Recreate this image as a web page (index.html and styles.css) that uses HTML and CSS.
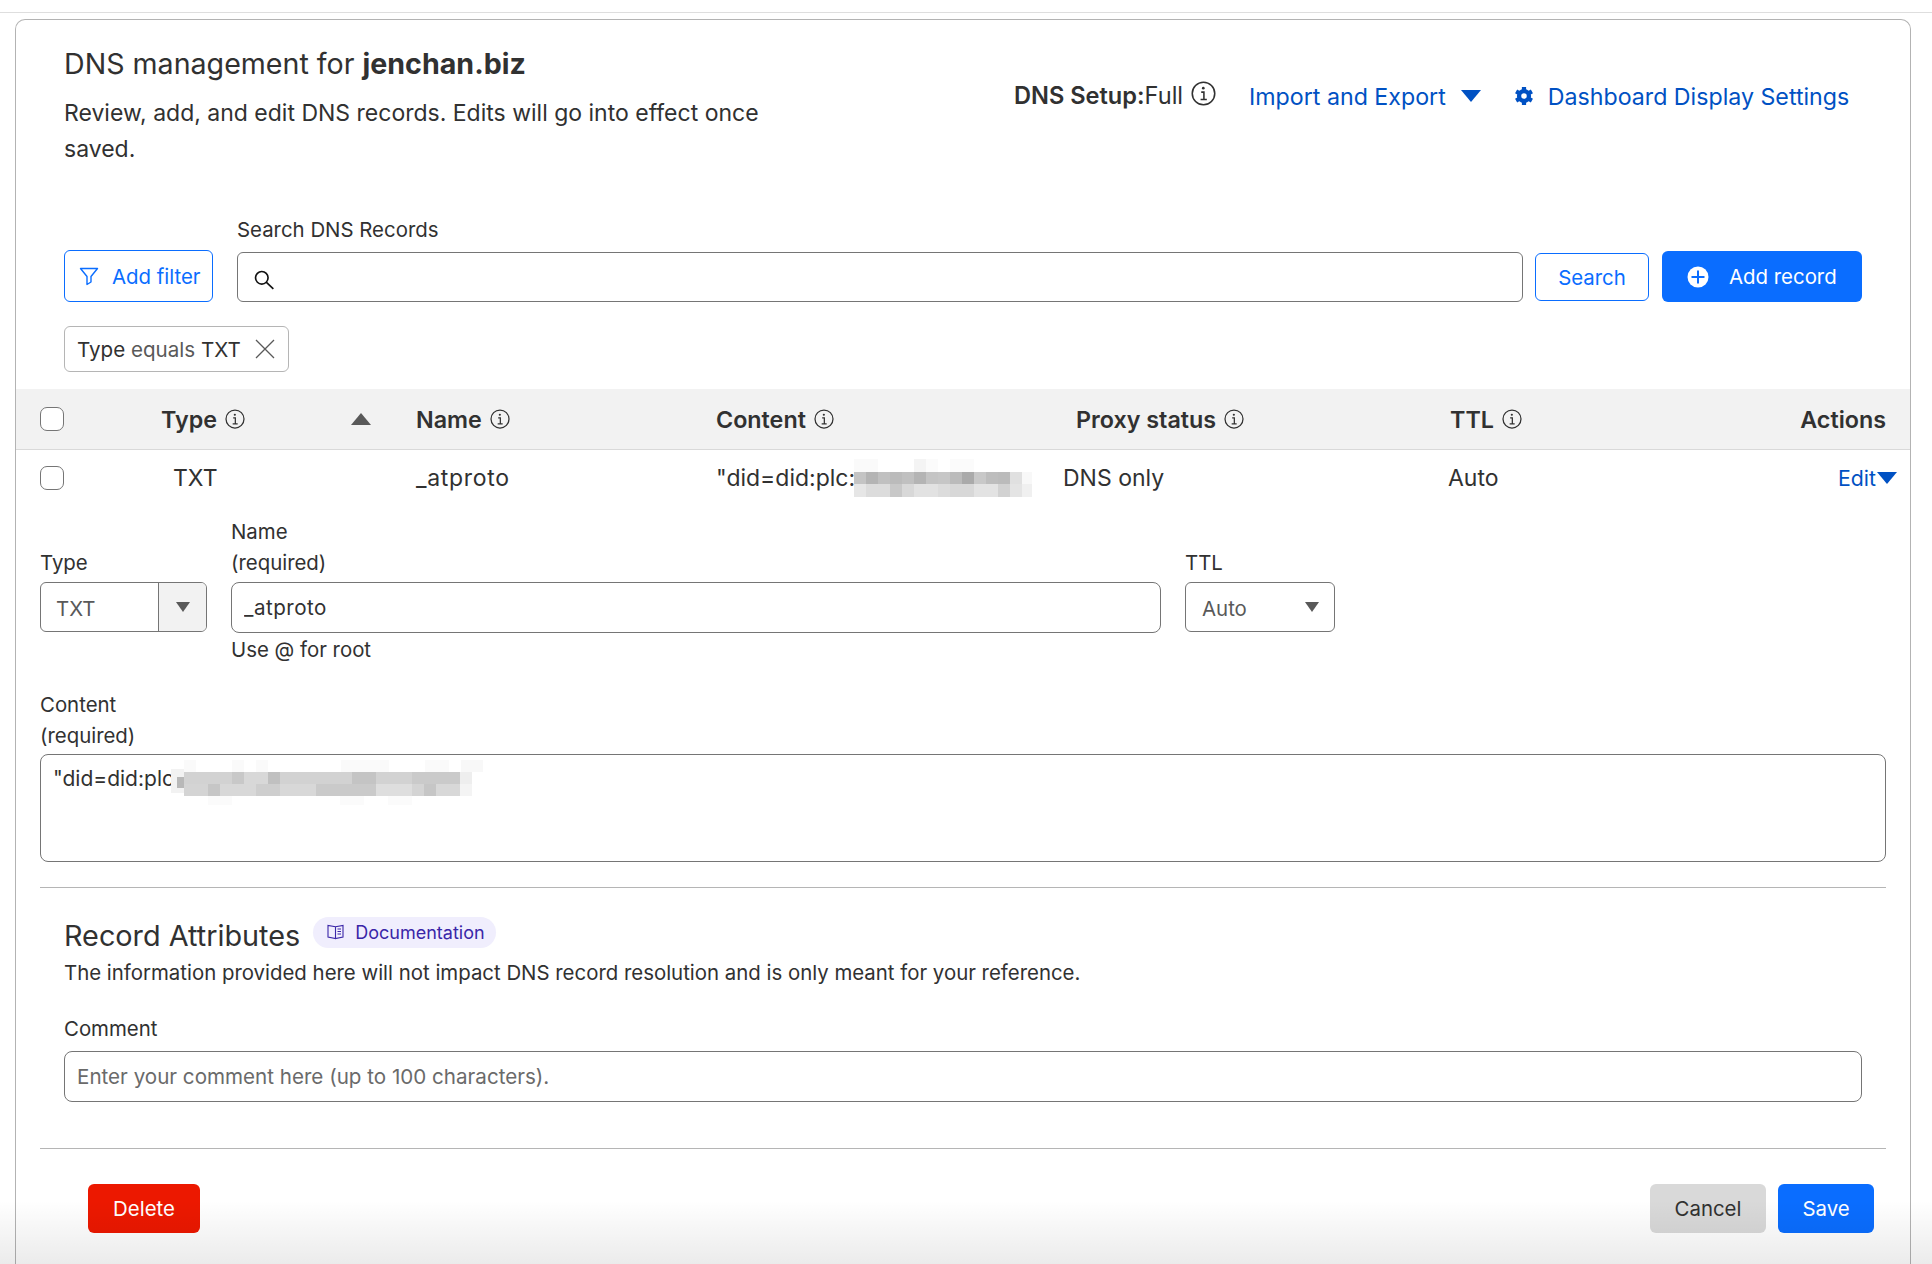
FILE: index.html
```html
<!DOCTYPE html>
<html lang="en">
<head>
    <meta charset="UTF-8">
    <title>DNS management</title>
    <link rel="stylesheet" href="styles.css">
</head>
<body>
    <svg class="icon-defs" width="0" height="0">
        <symbol id="info" viewBox="0 0 24 24">
            <circle cx="12" cy="12" r="10.8" fill="none" stroke="currentColor" stroke-width="1.5"/>
            <path d="M9.8 10.7h2.6v7M9.2 17.8h6" fill="none" stroke="currentColor" stroke-width="1.5"/>
            <circle cx="11.8" cy="6.9" r="1.3" fill="currentColor"/>
        </symbol>
    </svg>

    <div class="top-rule"></div>

    <div class="card">
        <div class="page-head">
            <div class="page-intro">
                <h1>DNS management for <strong>jenchan.biz</strong></h1>
                <p>Review, add, and edit DNS records. Edits will go into effect once saved.</p>
            </div>
            <div class="page-meta">
                <span class="setup"><strong>DNS Setup:</strong>Full</span>
                <svg class="info-lg"><use href="#info"/></svg>
                <a class="link import-link">Import and Export</a>
                <span class="tri tri-lg"></span>
                <svg class="gear" viewBox="0 0 18 18">
                    <path d="M9 .8v16.4M1.9 4.9l14.2 8.2M1.9 13.1l14.2-8.2" stroke="#0051c3" stroke-width="3.8"/>
                    <circle cx="9" cy="9" r="6.4" fill="#0051c3"/>
                    <circle cx="9" cy="9" r="2.5" fill="#fff"/>
                </svg>
                <a class="link">Dashboard Display Settings</a>
            </div>
        </div>

        <div class="toolbar">
            <button class="btn btn-outline btn-filter">
                <svg width="20" height="20" viewBox="0 0 20 20"><path d="M1.5 2.5h17L12 10.5v5.5l-4 2.5v-8z" fill="none" stroke="#0a6dff" stroke-width="1.4" stroke-linejoin="round"/></svg>
                Add filter
            </button>
            <div class="search-field">
                <label>Search DNS Records</label>
                <div class="search-box">
                    <svg width="22" height="22" viewBox="0 0 20 20"><circle cx="8" cy="8" r="5.7" fill="none" stroke="#111" stroke-width="1.5"/><path d="M12 12l6.5 6" stroke="#111" stroke-width="1.5"/></svg>
                    <input type="text" aria-label="Search DNS Records">
                </div>
            </div>
            <button class="btn btn-outline btn-search">Search</button>
            <button class="btn btn-primary btn-add">
                <svg width="22" height="22" viewBox="0 0 22 22"><circle cx="11" cy="11" r="10.5" fill="#fff"/><path d="M11 4.5v13M4.5 11h13" stroke="#0a6dff" stroke-width="2"/></svg>
                Add record
            </button>
        </div>

        <div class="chip">
            <span>Type <em>equals</em> TXT</span>
            <svg width="20" height="20" viewBox="0 0 20 20"><path d="M1 1l18 18M19 1L1 19" stroke="#595959" stroke-width="1.3"/></svg>
        </div>

        <div class="table-head">
            <span class="check"></span>
            <span class="th">Type <svg class="info-sm"><use href="#info"/></svg></span>
            <span class="tri tri-up"></span>
            <span class="th">Name <svg class="info-sm"><use href="#info"/></svg></span>
            <span class="th">Content <svg class="info-sm"><use href="#info"/></svg></span>
            <span class="th">Proxy status <svg class="info-sm"><use href="#info"/></svg></span>
            <span class="th">TTL <svg class="info-sm"><use href="#info"/></svg></span>
            <span class="th th-end">Actions</span>
        </div>

        <div class="table-row">
            <span class="check"></span>
            <span class="cell-type">TXT</span>
            <span class="cell-name">_atproto</span>
            <span class="cell-content">"did=did:plc:<svg class="redact-row" width="178" height="38" viewBox="0 0 178 38" shape-rendering="crispEdges">
                <rect x="0" y="0" width="24" height="13" fill="#fafafa"/><rect x="60" y="0" width="12" height="13" fill="#f4f4f4"/><rect x="72" y="0" width="12" height="13" fill="#fbfbfb"/><rect x="96" y="0" width="24" height="13" fill="#fbfbfb"/>
                <rect x="0" y="13" width="12" height="12" fill="#c4c4c4"/><rect x="12" y="13" width="12" height="12" fill="#b4b4b4"/><rect x="24" y="13" width="12" height="12" fill="#c0c0c0"/><rect x="36" y="13" width="12" height="12" fill="#bbb"/><rect x="48" y="13" width="12" height="12" fill="#c0c0c0"/><rect x="60" y="13" width="12" height="12" fill="#b4b4b4"/><rect x="72" y="13" width="12" height="12" fill="#c4c4c4"/><rect x="84" y="13" width="12" height="12" fill="#c6c6c6"/><rect x="96" y="13" width="12" height="12" fill="#bbb"/><rect x="108" y="13" width="12" height="12" fill="#aaa"/><rect x="120" y="13" width="12" height="12" fill="#c8c8c8"/><rect x="132" y="13" width="12" height="12" fill="#bdbdbd"/><rect x="144" y="13" width="12" height="12" fill="#bbb"/><rect x="156" y="13" width="12" height="12" fill="#e0e0e0"/><rect x="168" y="13" width="10" height="12" fill="#f8f8f8"/>
                <rect x="0" y="25" width="12" height="13" fill="#e6e6e6"/><rect x="12" y="25" width="24" height="13" fill="#dcdcdc"/><rect x="36" y="25" width="12" height="13" fill="#c8c8c8"/><rect x="48" y="25" width="12" height="13" fill="#d8d8d8"/><rect x="60" y="25" width="24" height="13" fill="#e2e2e2"/><rect x="84" y="25" width="12" height="13" fill="#dcdcdc"/><rect x="96" y="25" width="24" height="13" fill="#d8d8d8"/><rect x="120" y="25" width="24" height="13" fill="#e3e3e3"/><rect x="144" y="25" width="12" height="13" fill="#d2d2d2"/><rect x="156" y="25" width="12" height="13" fill="#e4e4e4"/><rect x="168" y="25" width="10" height="13" fill="#f0f0f0"/>
            </svg></span>
            <span>DNS only</span>
            <span>Auto</span>
            <a class="link edit-link">Edit<span class="tri tri-md"></span></a>
        </div>

        <div class="edit-grid">
            <label class="label-end">Type</label>
            <label class="label-end">Name<br>(required)</label>
            <label class="label-end">TTL</label>
            <div class="select select-type"><span>TXT</span><span class="select-arrow"><span class="tri tri-sm"></span></span></div>
            <input class="input input-name" type="text" value="_atproto" aria-label="Name">
            <div class="select select-ttl"><span>Auto</span><span class="tri tri-sm"></span></div>
            <span class="hint">Use @ for root</span>
        </div>

        <div class="content-field">
            <label>Content<br>(required)</label>
            <div class="content-box">"did=did:plc<svg class="redact-box" width="312" height="48" viewBox="0 0 312 48" shape-rendering="crispEdges">
                <rect x="0" y="12" width="13" height="24" fill="#f2f2f2"/><rect x="6" y="20" width="7" height="11" fill="#b8b8b8"/>
                <rect x="13" y="3" width="12" height="12" fill="#fafafa"/><rect x="61" y="3" width="12" height="12" fill="#fafafa"/><rect x="85" y="3" width="12" height="12" fill="#fafafa"/><rect x="170" y="3" width="48" height="12" fill="#fafafa"/><rect x="254" y="3" width="24" height="12" fill="#fafafa"/><rect x="290" y="3" width="22" height="12" fill="#f8f8f8"/>
                <rect x="13" y="15" width="288" height="12" fill="#d2d2d2"/><rect x="61" y="15" width="12" height="12" fill="#c8c8c8"/><rect x="73" y="15" width="24" height="12" fill="#d8d8d8"/><rect x="97" y="15" width="12" height="12" fill="#c0c0c0"/><rect x="181" y="15" width="24" height="12" fill="#c4c4c4"/><rect x="241" y="15" width="48" height="12" fill="#cacaca"/><rect x="289" y="15" width="12" height="12" fill="#eee"/>
                <rect x="13" y="27" width="288" height="12" fill="#d4d4d4"/><rect x="37" y="27" width="12" height="12" fill="#c6c6c6"/><rect x="49" y="27" width="36" height="12" fill="#d8d8d8"/><rect x="85" y="27" width="24" height="12" fill="#cecece"/><rect x="109" y="27" width="36" height="12" fill="#d8d8d8"/><rect x="145" y="27" width="60" height="12" fill="#cacaca"/><rect x="205" y="27" width="36" height="12" fill="#dedede"/><rect x="241" y="27" width="12" height="12" fill="#d4d4d4"/><rect x="253" y="27" width="12" height="12" fill="#c6c6c6"/><rect x="265" y="27" width="24" height="12" fill="#d8d8d8"/><rect x="289" y="27" width="12" height="12" fill="#f4f4f4"/>
                <rect x="37" y="39" width="24" height="9" fill="#fbfbfb"/><rect x="169" y="39" width="24" height="9" fill="#fbfbfb"/><rect x="217" y="39" width="24" height="9" fill="#fbfbfb"/>
            </svg></div>
        </div>

        <div class="rule rule-attrs"></div>

        <div class="attrs">
            <div class="attrs-title">
                <h2>Record Attributes</h2>
                <a class="doc-pill">
                    <svg width="17" height="16" viewBox="0 0 17 16" fill="none" stroke="#3a26a8" stroke-width="1.1"><path d="M8.5 2.8L1 1.5v11.5l7.5 1.5zM8.5 2.8L16 1.5v11.5l-7.5 1.5z"/><path d="M10.5 5h3.5M10.5 7.5h3.5M10.5 10h3.5"/></svg>
                    Documentation
                </a>
            </div>
            <p>The information provided here will not impact DNS record resolution and is only meant for your reference.</p>
            <label class="comment-label">Comment</label>
            <input class="input" type="text" placeholder="Enter your comment here (up to 100 characters)." aria-label="Comment">
        </div>

        <div class="rule rule-foot"></div>

        <div class="form-foot">
            <button class="btn btn-danger">Delete</button>
            <div class="foot-right">
                <button class="btn btn-grey">Cancel</button>
                <button class="btn btn-primary btn-save">Save</button>
            </div>
        </div>
    </div>

    <div class="bottom-fade"></div>
</body>
</html>
```

FILE: styles.css
```css
* {
    box-sizing: border-box;
}

html, body {
    height: 100%;
}

body {
    margin: 0;
    overflow: hidden;
    position: relative;
    background-color: #fff;
    color: #313131;
    font-family: Inter, "Liberation Sans", sans-serif;
    font-size: 20.4px;
}

.icon-defs {
    display: block;
    height: 0;
}

.top-rule {
    height: 13px;
    border-bottom: 1px solid #dedede;
}

.card {
    width: 1896px;
    height: 1245px;
    margin: 6px 0 0 15px;
    border: 1px solid #b3b3b3;
    border-bottom: none;
    border-radius: 10px 10px 0 0;
}

/* page header */
.page-head {
    display: flex;
    padding: 26px 0 0 48px;
    height: 196px;
}

.page-intro {
    width: 731px;
}

h1 {
    margin: 0 0 13px;
    font-size: 28.6px;
    line-height: 36px;
    font-weight: 400;
}

h1 strong {
    font-weight: 700;
}

.page-intro p {
    margin: 0;
    font-size: 23px;
    line-height: 36px;
}

.page-meta {
    display: flex;
    align-items: center;
    height: 50px;
    margin-top: 26px;
    margin-left: 219px;
    font-size: 23.2px;
}

.setup {
    margin-top: -4px;
    font-size: 23.6px;
}

.setup strong {
    font-weight: 600;
}

.info-lg {
    width: 25px;
    height: 25px;
    margin: -7px 0 0 8px;
}

.link {
    color: #0051c3;
}

.import-link {
    margin-left: 33px;
}

.tri {
    display: inline-block;
    width: 0;
    height: 0;
    border-style: solid;
    border-color: #0051c3 transparent transparent;
}

.tri-lg {
    border-width: 12px 10.5px 0;
    margin: -3px 0 0 15px;
}

.gear {
    width: 20px;
    height: 20px;
    margin: -2px 0 0 33px;
}

.gear + .link {
    margin-left: 14px;
}

/* filter bar */
.toolbar {
    display: flex;
    align-items: flex-end;
    padding-left: 48px;
}

.btn {
    border: none;
    border-radius: 6px;
    font-family: inherit;
    font-size: 20.4px;
    cursor: pointer;
}

.btn-outline {
    background: #fff;
    border: 1.5px solid #0a6dff;
    color: #0a6dff;
}

.btn-filter {
    display: flex;
    align-items: center;
    gap: 13px;
    width: 149px;
    height: 52px;
    padding: 0 0 0 14px;
}

.search-field {
    width: 1286px;
    margin-left: 24px;
}

.search-field label {
    display: block;
    line-height: 28px;
    margin-bottom: 8px;
}

.search-box {
    display: flex;
    align-items: center;
    height: 50px;
    padding: 5px 10px 0 15px;
    border: 1px solid #757575;
    border-radius: 6px;
}

.search-box input {
    flex: 1;
    border: none;
    outline: none;
}

.btn-search {
    width: 114px;
    height: 48px;
    margin: 0 0 1px 12px;
}

.btn-primary {
    background: #0a6dff;
    color: #fff;
}

.btn-add {
    display: flex;
    align-items: center;
    gap: 20px;
    width: 200px;
    height: 51px;
    margin-left: 13px;
    padding: 0 0 0 25px;
}

.chip {
    display: inline-flex;
    align-items: center;
    gap: 14px;
    width: 225px;
    height: 46px;
    margin: 24px 0 0 48px;
    padding-left: 12px;
    border: 1px solid #b5b5b5;
    border-radius: 6px;
    font-size: 20.6px;
}

.chip em {
    font-style: normal;
    color: #595959;
}

/* table */
.table-head {
    display: grid;
    grid-template-columns: 121px 190px 65px 300px 360px 374px 1fr auto;
    align-items: center;
    height: 61px;
    margin-top: 17px;
    padding: 0 24px;
    background: #f2f2f2;
    border-bottom: 1px solid #d9d9d9;
}

.th {
    display: flex;
    align-items: center;
    gap: 8px;
    font-size: 23.3px;
    font-weight: 600;
}

.info-sm {
    width: 20px;
    height: 20px;
    margin-top: -1px;
}

.tri-up {
    border-width: 0 10.5px 12px;
    border-color: transparent transparent #595959;
}

.check {
    display: block;
    width: 24px;
    height: 24px;
    background: #fff;
    border: 1px solid #757575;
    border-radius: 7px;
}

.table-row {
    display: grid;
    grid-template-columns: 122px 254px 300px 347px 385px 1fr auto;
    align-items: center;
    height: 56px;
    padding: 0 13px 0 24px;
    font-size: 23px;
}

.cell-type {
    padding-left: 11px;
}

.cell-name {
    letter-spacing: 0.7px;
}

.cell-content {
    display: flex;
    align-items: center;
}

.redact-row {
    flex: none;
    margin-left: -1px;
}

.edit-link {
    display: flex;
    align-items: center;
    font-size: 21.3px;
    color: #0051c3;
}

.tri-md {
    border-width: 12px 10px 0;
    margin-left: 1px;
}

/* edit form */
.edit-grid {
    display: grid;
    grid-template-columns: 167px 930px 150px;
    column-gap: 24px;
    padding: 10px 24px 0;
}

.edit-grid label, .content-field label {
    line-height: 31px;
}

.label-end {
    align-self: end;
    margin-bottom: 3px;
}

.select {
    display: flex;
    align-items: center;
    justify-content: space-between;
    height: 50px;
    margin-top: 1px;
    border: 1px solid #757575;
    border-radius: 6px;
    color: #595959;
    overflow: hidden;
}

.select > span:first-child {
    padding-top: 2px;
}

.select-type {
    padding-left: 15px;
}

.select-arrow {
    display: flex;
    align-items: center;
    justify-content: center;
    width: 48px;
    height: 100%;
    background: #f2f2f2;
    border-left: 1px solid #757575;
}

.select-ttl {
    padding: 0 15px 0 16px;
}

.tri-sm {
    border-width: 10px 7px 0;
    border-top-color: #595959;
}

.input {
    width: 100%;
    height: 51px;
    padding: 0 12px;
    border: 1px solid #757575;
    border-radius: 8px;
    font-family: inherit;
    font-size: 20.6px;
    color: #313131;
}

.input-name {
    margin-top: 1px;
    letter-spacing: 0.5px;
}

.input::placeholder {
    color: #6a6a6a;
    opacity: 1;
}

.hint {
    grid-column: 2;
    margin-top: 2px;
    line-height: 30px;
}

.content-field {
    padding: 24px 24px 0;
}

.content-field label {
    display: block;
    margin-bottom: 3px;
}

.content-box {
    display: flex;
    align-items: flex-start;
    height: 108px;
    margin-top: 1px;
    padding: 10px 0 0 12px;
    border: 1px solid #757575;
    border-radius: 8px;
    font-size: 21px;
    line-height: 28px;
}

.redact-box {
    flex: none;
    margin: -8px 0 0 -3px;
}

.rule {
    height: 1px;
    margin: 0 24px;
    background: #b5b5b5;
}

.rule-attrs {
    margin-top: 25px;
}

.attrs {
    padding: 29px 48px 0;
}

.attrs-title {
    display: flex;
    align-items: center;
    gap: 13px;
    height: 36px;
}

h2 {
    margin: 0;
    font-size: 28.8px;
    font-weight: 400;
}

.doc-pill {
    display: flex;
    align-items: center;
    gap: 11px;
    width: 183px;
    height: 31px;
    margin-top: -6px;
    padding-left: 14px;
    background: #f0eefd;
    border-radius: 16px;
    font-size: 18px;
    color: #3a26a8;
}

.attrs p {
    margin: 5px 0 0;
    line-height: 30px;
}

.comment-label {
    display: block;
    margin-top: 26px;
    line-height: 30px;
    margin-bottom: 7px;
}

.rule-foot {
    margin-top: 46px;
}

.form-foot {
    display: flex;
    justify-content: space-between;
    padding: 35px 36px 0 72px;
}

.form-foot .btn {
    height: 49px;
}

.btn-danger {
    width: 112px;
    background: #ec1800;
    color: #fff;
}

.foot-right {
    display: flex;
    gap: 12px;
}

.btn-grey {
    width: 116px;
    background: #d9d9d9;
    color: #313131;
}

.btn-save {
    width: 96px;
}

.bottom-fade {
    position: absolute;
    left: 0;
    right: 0;
    bottom: 0;
    height: 64px;
    background: linear-gradient(rgba(0, 0, 0, 0), rgba(0, 0, 0, 0.08));
    pointer-events: none;
}
```
